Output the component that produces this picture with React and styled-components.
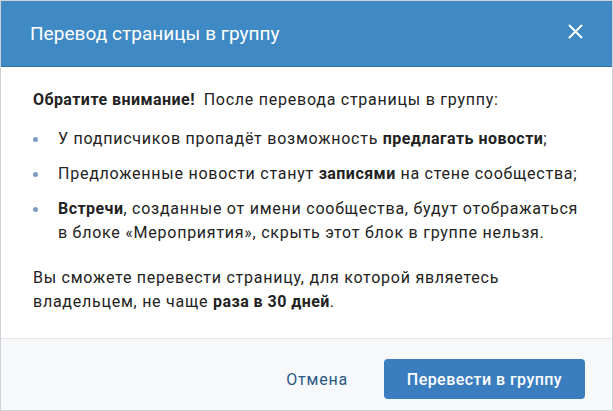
import styled, { createGlobalStyle } from "styled-components";

const GlobalStyle = createGlobalStyle`
    html, body {
        margin: 0;
        padding: 0;
        background: #fff;
    }
    body {
        font-family: Roboto, "Open Sans", "Liberation Sans", sans-serif;
        -webkit-font-smoothing: antialiased;
    }
`;

const Modal = styled.div`
    box-sizing: border-box;
    width: 613px;
    height: 411px;
    border: 1px solid #cfd1d4;
    background: #fff;
    display: flex;
    flex-direction: column;
`;

const Header = styled.div`
    height: 65px;
    flex-shrink: 0;
    background: #3f8ac5;
    border-bottom: 1px solid #2e74b0;
    display: flex;
    align-items: center;
    justify-content: space-between;
    padding: 0 29px 0 29px;
    color: #fff;
`;

const Title = styled.div`
    font-size: 19px;
    font-weight: 400;
    letter-spacing: 0.05px;
    margin-top: -1px;
`;

const CloseButton = styled.button`
    border: none;
    background: none;
    padding: 0;
    width: 16px;
    height: 16px;
    display: flex;
    align-items: center;
    justify-content: center;
    cursor: pointer;
    margin-top: -4px;
`;

const Body = styled.div`
    flex: 1;
    padding: 21px 26px 0 32px;
    font-size: 16px;
    line-height: 24px;
    letter-spacing: 0.75px;
    color: #222;
    b {
        font-weight: 700;
        letter-spacing: 0.45px;
    }
`;

const Lead = styled.p`
    margin: 0 0 15px;
    b {
        margin-right: 4px;
    }
`;

const List = styled.ul`
    list-style: none;
    margin: 0;
    padding: 0;
`;

const Item = styled.li`
    position: relative;
    padding-left: 25px;
    margin-top: ${(p) => (p.$first ? "0" : "11px")};
    &::before {
        content: "";
        position: absolute;
        left: 0;
        top: 10px;
        width: 5px;
        height: 5px;
        border-radius: 50%;
        background: #7d9cbd;
    }
`;

const Note = styled.p`
    margin: 21px 0 0;
    max-width: 480px;
`;

const Footer = styled.div`
    flex-shrink: 0;
    height: 72px;
    box-sizing: border-box;
    border-top: 1px solid #e4e6ea;
    background: #f7f8fa;
    display: flex;
    align-items: flex-start;
    justify-content: flex-end;
    gap: 18px;
    padding: 20px 27px 0 0;
`;

const Button = styled.button`
    font-family: inherit;
    font-size: 16px;
    height: 40px;
    border-radius: 4px;
    border: none;
    cursor: pointer;
    padding: 0 ${(p) => (p.$primary ? "22px" : "18px")};
    min-width: ${(p) => (p.$primary ? "201px" : "0")};
    letter-spacing: ${(p) => (p.$primary ? "0.45px" : "0.8px")};
    background: ${(p) => (p.$primary ? "#3a7ebf" : "transparent")};
    color: ${(p) => (p.$primary ? "#fff" : "#2a5885")};
    font-weight: ${(p) => (p.$primary ? 500 : 400)};
`;

export default function App() {
    return (
        <>
            <GlobalStyle />
            <Modal>
                <Header>
                    <Title>Перевод страницы в группу</Title>
                    <CloseButton aria-label="Закрыть">
                        <svg width="15" height="15" viewBox="0 0 15 15">
                            <path d="M1.5 1.5 L13.5 13.5 M13.5 1.5 L1.5 13.5" stroke="#fff" strokeWidth="2" strokeLinecap="round" />
                        </svg>
                    </CloseButton>
                </Header>
                <Body>
                    <Lead>
                        <b>Обратите внимание!</b> После перевода страницы в группу:
                    </Lead>
                    <List>
                        <Item $first>
                            У подписчиков пропадёт возможность <b>предлагать новости</b>;
                        </Item>
                        <Item>
                            Предложенные новости станут <b>записями</b> на стене сообщества;
                        </Item>
                        <Item>
                            <b>Встречи</b>, созданные от имени сообщества, будут отображаться в блоке «Мероприятия», скрыть этот блок в группе нельзя.
                        </Item>
                    </List>
                    <Note>
                        Вы сможете перевести страницу, для которой являетесь владельцем, не чаще <b>раза в 30 дней</b>.
                    </Note>
                </Body>
                <Footer>
                    <Button>Отмена</Button>
                    <Button $primary>Перевести в группу</Button>
                </Footer>
            </Modal>
        </>
    );
}
